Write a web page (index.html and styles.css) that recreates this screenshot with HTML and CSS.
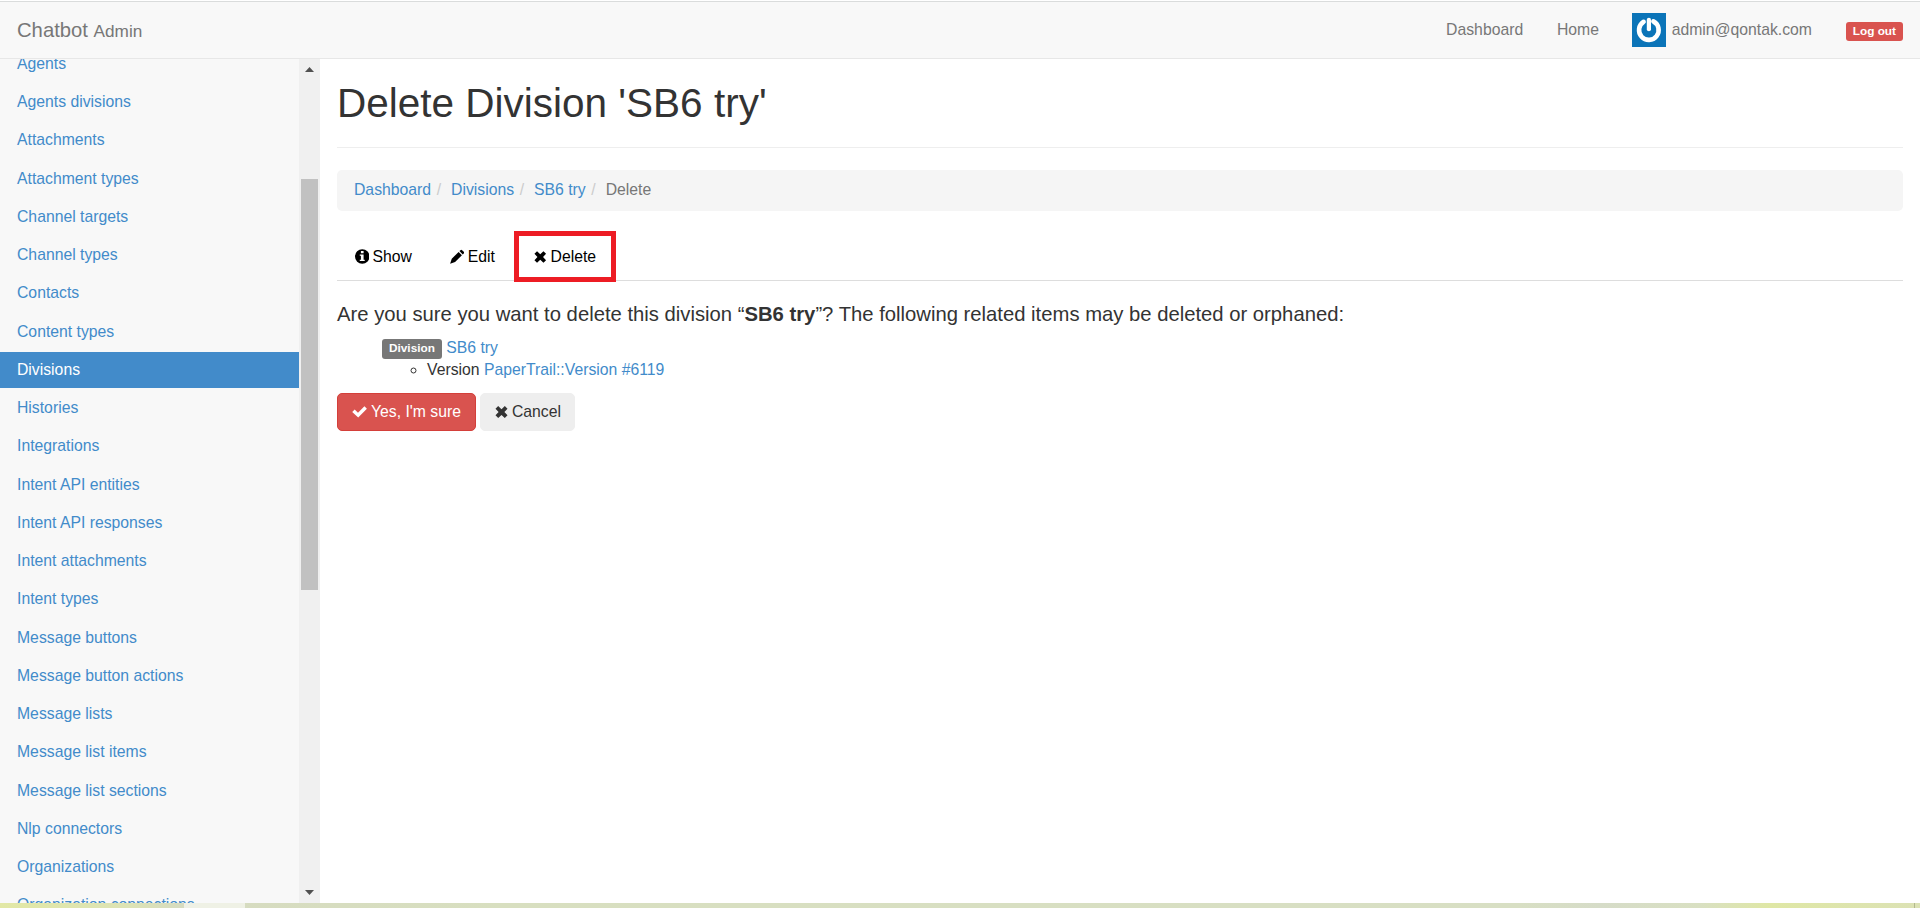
FILE: index.html
```html
<!DOCTYPE html>
<html lang="en">
<head>
<meta charset="utf-8">
<title>Delete Division 'SB6 try' | Chatbot Admin</title>
<link rel="stylesheet" href="styles.css">
</head>
<body>
<div class="page">
<header class="navbar">
  <a class="brand">Chatbot <small>Admin</small></a>
  <nav class="topnav">
    <a>Dashboard</a>
    <a>Home</a>
    <a class="user"><svg class="avatar" viewBox="0 0 34 34"><rect width="34" height="34" fill="#0b74b8"/><path d="M11.600 8.800A9.800 9.800 0 1 0 21.400 8.400" fill="none" stroke="#fff" stroke-width="4.600" stroke-linecap="round"/><path d="M16.900 6.800v9.400" stroke="#fff" stroke-width="4.200" stroke-linecap="round"/></svg>admin@qontak.com</a>
    <a><span class="label label-danger">Log out</span></a>
  </nav>
</header>
<div class="body">
  <aside class="sidebar">
    <ul class="menu">
      <li>Agents</li><li>Agents divisions</li><li>Attachments</li><li>Attachment types</li><li>Channel targets</li><li>Channel types</li><li>Contacts</li><li>Content types</li><li class="active">Divisions</li><li>Histories</li><li>Integrations</li><li>Intent API entities</li><li>Intent API responses</li><li>Intent attachments</li><li>Intent types</li><li>Message buttons</li><li>Message button actions</li><li>Message lists</li><li>Message list items</li><li>Message list sections</li><li>Nlp connectors</li><li>Organizations</li><li>Organization connections</li>
    </ul>
    <div class="scrollbar">
      <svg class="arrow" viewBox="0 0 9 5"><path d="M0 5 4.500 0 9 5z"/></svg>
      <div class="thumb"></div>
      <svg class="arrow" viewBox="0 0 9 5"><path d="M0 0h9L4.500 5z"/></svg>
    </div>
  </aside>
  <main class="content">
    <h1>Delete Division 'SB6 try'</h1>
    <ol class="breadcrumb"><li><a>Dashboard</a></li><li><a>Divisions</a></li><li><a>SB6 try</a></li><li>Delete</li></ol>
    <ul class="tabs">
      <li><svg class="icon" viewBox="0 0 14 14"><path fill-rule="evenodd" d="M7 0a7 7 0 1 1 0 14A7 7 0 0 1 7 0zM5.700 1.800v2h2.600v-2zM4.600 5v1.200h1.100v3.900H4.600v1.300h4.800v-1.300H8.300V5z"/></svg>Show</li>
      <li><svg class="icon" viewBox="0 0 14 14"><path d="M10.100.9q.8-.8 1.600 0l1.600 1.500q.7.8 0 1.600l-1 1-3.200-3.200zM8.300 2.600l3.200 3.200-6.600 6.500L.1 13.900l1.600-4.700z"/></svg>Edit</li>
      <li class="marked"><svg class="icon" viewBox="0 0 14 14"><path d="M3.900 1.900 7 4.800l3.100-2.900 2.500 2.500L9.700 7.500l2.900 3.100-2.500 2.500L7 10.200l-3.100 2.900-2.500-2.500 2.900-3.100-2.900-3.100z"/></svg>Delete</li>
    </ul>
    <h4>Are you sure you want to delete this division “<strong>SB6 try</strong>”? The following related items may be deleted or orphaned:</h4>
    <ul class="related">
      <li><span class="label label-default">Division</span> <a>SB6 try</a>
        <ul><li>Version <a>PaperTrail::Version #6119</a></li></ul>
      </li>
    </ul>
    <div class="actions">
      <button class="btn btn-danger"><svg class="icon" viewBox="0 0 14 14"><path d="M11.600 2.200 13.900 4.500 5.800 12.600.2 7.500 2.500 5.200 5.600 8.200z"/></svg>Yes, I'm sure</button>
      <button class="btn btn-default"><svg class="icon" viewBox="0 0 14 14"><path d="M3.900 1.900 7 4.800l3.100-2.900 2.500 2.500L9.700 7.500l2.900 3.100-2.500 2.500L7 10.200l-3.100 2.900-2.500-2.500 2.900-3.100-2.900-3.100z"/></svg>Cancel</button>
    </div>
  </main>
</div>
<div class="strip"></div>
</div>
</body>
</html>
```
FILE: styles.css
```css
*, *::before, *::after { box-sizing: border-box; }
body { margin: 0; font: 15.75px/22.5px "Liberation Sans", Arial, sans-serif; color: #333; background: #fff; }
a { color: #428bca; }
ul, ol { list-style: none; margin: 0; padding: 0; }
.page { height: 908px; display: flex; flex-direction: column; overflow: hidden; padding-top: 1px; }
.navbar { flex: none; height: 58px; display: flex; justify-content: space-between; background: #f8f8f8; border-top: 1px solid #dadcdc; border-bottom: 1px solid #e7e7e7; padding: 0 17px; }
.navbar a { color: #777; }
.brand { font-size: 20.25px; line-height: 56px; }
.brand small { font-size: 17.2px; }
.topnav { display: flex; gap: 33.75px; line-height: 55px; }
.user { display: flex; align-items: center; gap: 6px; height: 55px; margin-left: -1px; }
.avatar { width: 34px; height: 34px; margin-top: 1px; }
.label { display: inline-block; font-size: 11.8px; font-weight: bold; line-height: 12px; color: #fff; border-radius: 3px; padding: 3px 7px 4px; }
.label-danger { background: #d9534f; }
.label-default { background: #777; line-height: 13px; }
.body { flex: 1; min-height: 0; display: flex; }
.sidebar { width: 320px; display: flex; background: #f8f8f8; overflow: hidden; }
.menu { flex: 1; margin-top: -13px; }
.menu li { height: 36px; margin-bottom: 2.25px; padding: 6.75px 17px; color: #428bca; white-space: nowrap; }
.menu .active { background: #428bca; color: #fff; }
.scrollbar { width: 21px; background: #f0f0f0; display: flex; flex-direction: column; align-items: center; padding: 8px 0; }
.arrow { width: 9px; height: 5px; fill: #505050; }
.thumb { width: 17px; height: 411px; margin: 107px 0 auto; background: #c1c1c1; }
.content { flex: 1; padding: 0 17px; }
h1 { margin: 0 0 22px; padding: 22px 0 21px; font-size: 40.5px; line-height: 45px; font-weight: 500; border-bottom: 1px solid #eee; }
.breadcrumb { display: flex; height: 41px; padding: 9px 17px; background: #f5f5f5; border-radius: 5px; color: #777; }
.breadcrumb li + li::before { content: "/"; color: #ccc; padding: 0 10px 0 5.6px; }
.tabs { display: flex; gap: 2.75px; height: 48px; margin: 22px 0 21px; border-bottom: 1px solid #ddd; color: #000; }
.tabs li { position: relative; padding: 13px 17.500px 12px; }
.tabs .icon { width: 14.500px; margin-right: 3.500px; }
.marked::after { content: ""; position: absolute; left: -1px; top: -2px; width: 102px; height: 51px; border: 5px solid #ed1c24; }
.icon { width: 15px; height: 15px; fill: currentColor; margin-right: 4px; vertical-align: -2px; }
h4 { margin: 0; font-size: 20.25px; line-height: 24px; font-weight: 500; }
.related { padding-left: 45px; margin-top: 11px; }
.related ul { list-style: circle; padding-left: 45px; margin-top: -1px; }
.label-default { margin: -1px 0 1px; vertical-align: 1px; }
.actions { display: flex; gap: 4px; margin-top: 11px; }
.btn { height: 38px; padding: 1px 14px 0; border: 1px solid; border-radius: 5px; font: inherit; white-space: nowrap; }
.btn-danger { background: #d9534f; border-color: #d43f3a; color: #fff; }
.btn-default { background: #eee; border-color: #eee; color: #333; padding: 1px 13px 0; }
.btn-default .icon { margin-right: 3px; }
.strip { flex: none; height: 5px; background: linear-gradient(90deg, transparent 184px, #eff1e5 184px 245px, transparent 245px), linear-gradient(90deg, #e2e8a5 0, #dde3b5 130px, #d6dbc0 184px, #d8dfc0 500px, #d8dfc4 1520px, #d6dcc8 1600px, #d9e0c2 1700px, #dfe7a5 1770px, #dce2b4 1914px, #b3b890 1914px 1915px, #dce2b4 1915px); }
```
